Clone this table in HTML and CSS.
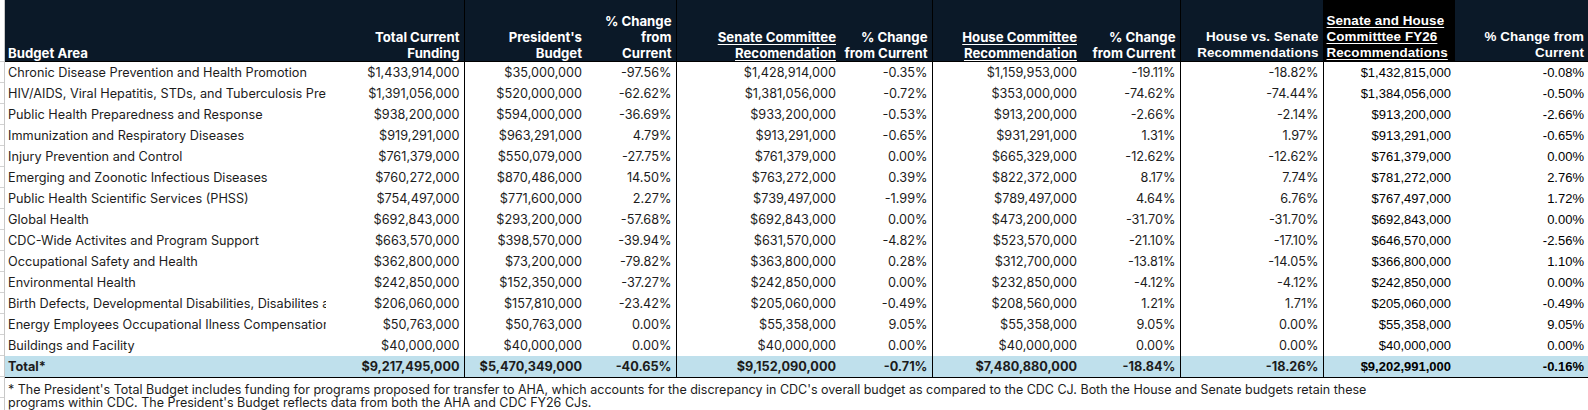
FILE: index.html
```html
<!DOCTYPE html>
<html lang="en">
<head>
<meta charset="utf-8">
<title>CDC Budget Comparison</title>
<link rel="stylesheet" href="styles.css">
</head>
<body>
<div class="page">
<div class="sheet">
<table class="budget">
  <colgroup>
    <col class="w-area"><col class="w-c2"><col class="w-c3"><col class="w-c4"><col class="w-c5"><col class="w-c6"><col class="w-c7"><col class="w-c8"><col class="w-c9"><col class="w-c10"><col class="w-c11">
  </colgroup>
  <thead>
    <tr>
      <th class="left">Budget Area</th>
      <th class="sep">Total Current<br>Funding</th>
      <th>President's<br>Budget</th>
      <th class="sep">% Change<br>from<br>Current</th>
      <th><u>Senate Committee</u><br><u>Recomendation</u></th>
      <th class="sep">% Change<br>from Current</th>
      <th><u>House Committee</u><br><u>Recommendation</u></th>
      <th class="sep">% Change<br>from Current</th>
      <th class="sep alt">House vs. Senate<br>Recommendations</th>
      <th class="left black alt"><u>Senate and House</u><br><u>Committtee FY26</u><br><u>Recommendations</u></th>
      <th class="alt">% Change from<br>Current</th>
    </tr>
  </thead>
  <tbody>
    <tr><td class="area">Chronic Disease Prevention and Health Promotion</td><td class="sep">$1,433,914,000</td><td>$35,000,000</td><td class="sep">-97.56%</td><td>$1,428,914,000</td><td class="sep">-0.35%</td><td>$1,159,953,000</td><td class="sep">-19.11%</td><td class="sep">-18.82%</td><td class="arial">$1,432,815,000</td><td class="arial">-0.08%</td></tr>
    <tr><td class="area">HIV/AIDS, Viral Hepatitis, STDs, and Tuberculosis Prevention</td><td class="sep">$1,391,056,000</td><td>$520,000,000</td><td class="sep">-62.62%</td><td>$1,381,056,000</td><td class="sep">-0.72%</td><td>$353,000,000</td><td class="sep">-74.62%</td><td class="sep">-74.44%</td><td class="arial">$1,384,056,000</td><td class="arial">-0.50%</td></tr>
    <tr><td class="area">Public Health Preparedness and Response</td><td class="sep">$938,200,000</td><td>$594,000,000</td><td class="sep">-36.69%</td><td>$933,200,000</td><td class="sep">-0.53%</td><td>$913,200,000</td><td class="sep">-2.66%</td><td class="sep">-2.14%</td><td class="arial">$913,200,000</td><td class="arial">-2.66%</td></tr>
    <tr><td class="area">Immunization and Respiratory Diseases</td><td class="sep">$919,291,000</td><td>$963,291,000</td><td class="sep">4.79%</td><td>$913,291,000</td><td class="sep">-0.65%</td><td>$931,291,000</td><td class="sep">1.31%</td><td class="sep">1.97%</td><td class="arial">$913,291,000</td><td class="arial">-0.65%</td></tr>
    <tr><td class="area">Injury Prevention and Control</td><td class="sep">$761,379,000</td><td>$550,079,000</td><td class="sep">-27.75%</td><td>$761,379,000</td><td class="sep">0.00%</td><td>$665,329,000</td><td class="sep">-12.62%</td><td class="sep">-12.62%</td><td class="arial">$761,379,000</td><td class="arial">0.00%</td></tr>
    <tr><td class="area">Emerging and Zoonotic Infectious Diseases</td><td class="sep">$760,272,000</td><td>$870,486,000</td><td class="sep">14.50%</td><td>$763,272,000</td><td class="sep">0.39%</td><td>$822,372,000</td><td class="sep">8.17%</td><td class="sep">7.74%</td><td class="arial">$781,272,000</td><td class="arial">2.76%</td></tr>
    <tr><td class="area">Public Health Scientific Services (PHSS)</td><td class="sep">$754,497,000</td><td>$771,600,000</td><td class="sep">2.27%</td><td>$739,497,000</td><td class="sep">-1.99%</td><td>$789,497,000</td><td class="sep">4.64%</td><td class="sep">6.76%</td><td class="arial">$767,497,000</td><td class="arial">1.72%</td></tr>
    <tr><td class="area">Global Health</td><td class="sep">$692,843,000</td><td>$293,200,000</td><td class="sep">-57.68%</td><td>$692,843,000</td><td class="sep">0.00%</td><td>$473,200,000</td><td class="sep">-31.70%</td><td class="sep">-31.70%</td><td class="arial">$692,843,000</td><td class="arial">0.00%</td></tr>
    <tr><td class="area">CDC-Wide Activites and Program Support</td><td class="sep">$663,570,000</td><td>$398,570,000</td><td class="sep">-39.94%</td><td>$631,570,000</td><td class="sep">-4.82%</td><td>$523,570,000</td><td class="sep">-21.10%</td><td class="sep">-17.10%</td><td class="arial">$646,570,000</td><td class="arial">-2.56%</td></tr>
    <tr><td class="area">Occupational Safety and Health</td><td class="sep">$362,800,000</td><td>$73,200,000</td><td class="sep">-79.82%</td><td>$363,800,000</td><td class="sep">0.28%</td><td>$312,700,000</td><td class="sep">-13.81%</td><td class="sep">-14.05%</td><td class="arial">$366,800,000</td><td class="arial">1.10%</td></tr>
    <tr><td class="area">Environmental Health</td><td class="sep">$242,850,000</td><td>$152,350,000</td><td class="sep">-37.27%</td><td>$242,850,000</td><td class="sep">0.00%</td><td>$232,850,000</td><td class="sep">-4.12%</td><td class="sep">-4.12%</td><td class="arial">$242,850,000</td><td class="arial">0.00%</td></tr>
    <tr><td class="area">Birth Defects, Developmental Disabilities, Disabilites and Health</td><td class="sep">$206,060,000</td><td>$157,810,000</td><td class="sep">-23.42%</td><td>$205,060,000</td><td class="sep">-0.49%</td><td>$208,560,000</td><td class="sep">1.21%</td><td class="sep">1.71%</td><td class="arial">$205,060,000</td><td class="arial">-0.49%</td></tr>
    <tr><td class="area">Energy Employees Occupational Ilness Compensation Program</td><td class="sep">$50,763,000</td><td>$50,763,000</td><td class="sep">0.00%</td><td>$55,358,000</td><td class="sep">9.05%</td><td>$55,358,000</td><td class="sep">9.05%</td><td class="sep">0.00%</td><td class="arial">$55,358,000</td><td class="arial">9.05%</td></tr>
    <tr><td class="area">Buildings and Facility</td><td class="sep">$40,000,000</td><td>$40,000,000</td><td class="sep">0.00%</td><td>$40,000,000</td><td class="sep">0.00%</td><td>$40,000,000</td><td class="sep">0.00%</td><td class="sep">0.00%</td><td class="arial">$40,000,000</td><td class="arial">0.00%</td></tr>
    <tr class="total"><td class="area">Total*</td><td class="sep">$9,217,495,000</td><td>$5,470,349,000</td><td class="sep">-40.65%</td><td>$9,152,090,000</td><td class="sep">-0.71%</td><td>$7,480,880,000</td><td class="sep">-18.84%</td><td class="sep">-18.26%</td><td class="arial">$9,202,991,000</td><td class="arial">-0.16%</td></tr>
  </tbody>
</table>
<p class="note">* The President's Total Budget includes funding for programs proposed for transfer to AHA, which accounts for the discrepancy in CDC's overall budget as compared to the CDC CJ. Both the House and Senate budgets retain these<br>programs within CDC. The President's Budget reflects data from both the AHA and CDC FY26 CJs.</p>
</div>
</div>
</body>
</html>
```

FILE: styles.css
```css
* { box-sizing: border-box; }
html, body { margin: 0; padding: 0; background: #fff; }
body { font-family: Inter, "Open Sans", sans-serif; color: #1c1c1c; }

.page {
  padding-left: 4px;
  background-image: repeating-linear-gradient(to bottom, #d2d2d2 0 1px, transparent 1px 21px);
  background-size: 4px 337px;
  background-position: 0 61px;
  background-repeat: no-repeat;
  min-height: 410px;
}

.sheet {
  border-left: 1px solid #c8c8c8;
  width: 1584px;
  min-height: 410px;
}

.budget {
  border-collapse: collapse;
  table-layout: fixed;
  width: 1583px;
}

.w-area { width: 321px; }
.w-c2 { width: 138px; }
.w-c3 { width: 122px; }
.w-c4 { width: 90px; }
.w-c5 { width: 164px; }
.w-c6 { width: 92px; }
.w-c7 { width: 149px; }
.w-c8 { width: 99px; }
.w-c9 { width: 143px; }
.w-c10 { width: 132px; }
.w-c11 { width: 133px; }

.budget th {
  background: #0b1928;
  color: #fff;
  font-weight: 700;
  font-size: 13.2px;
  line-height: 16px;
  height: 61px;
  padding: 0 4px 0 4px;
  text-align: right;
  vertical-align: bottom;
  border-bottom: 1px solid #000;
  white-space: nowrap;
}
.budget th.alt { font-family: "Liberation Sans", Arial, sans-serif; font-size: 13.4px; letter-spacing: 0.1px; }
.budget th.left { text-align: left; padding-left: 3px; }
.budget th.black { background: #000; }
.budget th u { text-decoration-thickness: 1px; text-underline-offset: 2px; }

.budget td {
  font-size: 12.7px;
  line-height: 21px;
  height: 21px;
  padding: 0 4px 0 4px;
  text-align: right;
  white-space: nowrap;
  overflow: hidden;
}
.budget td.area { text-align: left; padding-left: 3px; text-overflow: clip; }
.budget td.arial { font-family: "Liberation Sans", Arial, sans-serif; font-size: 13px; color: #000; }

.budget .sep { border-right: 1px solid #000; }

.budget tr.total td {
  background: #bfe0ec;
  font-weight: 700;
  border-bottom: 1px solid #000;
}

.note {
  margin: 0;
  padding: 5px 0 0 3px;
  font-size: 12.5px;
  line-height: 13px;
  color: #1c1c1c;
}
```
